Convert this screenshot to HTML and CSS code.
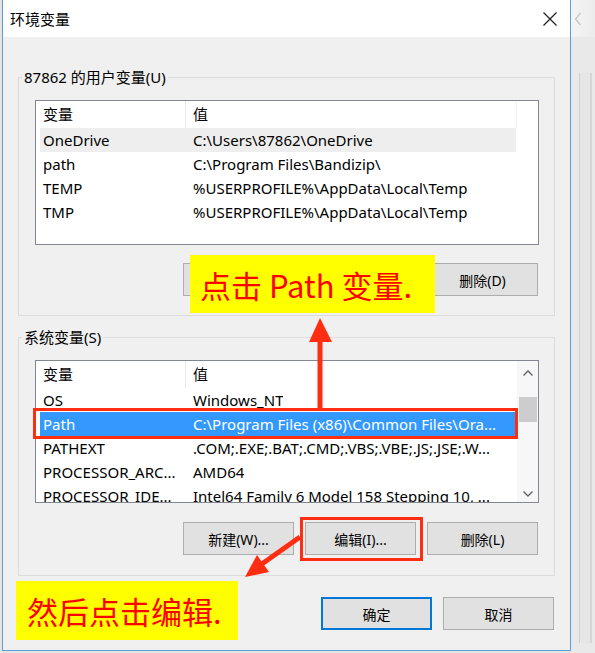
FILE: index.html
```html
<!DOCTYPE html>
<html lang="zh-CN">
<head>
    <meta charset="UTF-8">
    <title>环境变量</title>
    <link rel="stylesheet" href="styles.css">
</head>
<body>
    <div class="screen">
        <div class="dialog">
            <div class="titlebar">
                <span class="title">环境变量</span>
                <svg class="close" width="16" height="16" viewBox="0 0 16 16">
                    <path d="M1.5 1.5 L14.5 14.5 M14.5 1.5 L1.5 14.5" stroke="#222" stroke-width="1.3" fill="none"/>
                </svg>
            </div>
            <div class="content">
                <fieldset class="group group-user">
                    <legend>87862 的用户变量(U)</legend>
                    <div class="listbox list-user">
                        <div class="rows">
                            <div class="list-head"><span class="col-name">变量</span><span class="col-value">值</span></div>
                            <div class="row hover"><span class="col-name">OneDrive</span><span class="col-value">C:\Users\87862\OneDrive</span></div>
                            <div class="row"><span class="col-name">path</span><span class="col-value">C:\Program Files\Bandizip\</span></div>
                            <div class="row"><span class="col-name">TEMP</span><span class="col-value">%USERPROFILE%\AppData\Local\Temp</span></div>
                            <div class="row"><span class="col-name">TMP</span><span class="col-value">%USERPROFILE%\AppData\Local\Temp</span></div>
                        </div>
                        <div class="scroll-space"></div>
                    </div>
                    <div class="buttons">
                        <button>新建(N)...</button>
                        <button>编辑(E)...</button>
                        <button>删除(D)</button>
                    </div>
                </fieldset>

                <fieldset class="group group-system">
                    <legend>系统变量(S)</legend>
                    <div class="listbox list-system">
                        <div class="rows">
                            <div class="list-head"><span class="col-name">变量</span><span class="col-value">值</span></div>
                            <div class="row"><span class="col-name">OS</span><span class="col-value">Windows_NT</span></div>
                            <div class="row selected"><span class="col-name">Path</span><span class="col-value">C:\Program Files (x86)\Common Files\Ora...</span></div>
                            <div class="row"><span class="col-name">PATHEXT</span><span class="col-value">.COM;.EXE;.BAT;.CMD;.VBS;.VBE;.JS;.JSE;.W...</span></div>
                            <div class="row"><span class="col-name">PROCESSOR_ARC...</span><span class="col-value">AMD64</span></div>
                            <div class="row"><span class="col-name">PROCESSOR_IDE...</span><span class="col-value">Intel64 Family 6 Model 158 Stepping 10, ...</span></div>
                        </div>
                        <div class="scrollbar">
                            <svg class="arrow-up" width="12" height="8" viewBox="0 0 12 8"><path d="M1.5 6.5 L6 2 L10.5 6.5" stroke="#606060" stroke-width="1.3" fill="none"/></svg>
                            <div class="thumb"></div>
                            <svg class="arrow-down" width="12" height="8" viewBox="0 0 12 8"><path d="M1.5 1.5 L6 6 L10.5 1.5" stroke="#606060" stroke-width="1.3" fill="none"/></svg>
                        </div>
                    </div>
                    <div class="buttons">
                        <button>新建(W)...</button>
                        <button>编辑(I)...</button>
                        <button>删除(L)</button>
                    </div>
                </fieldset>

                <div class="buttons dialog-buttons">
                    <button class="default">确定</button>
                    <button>取消</button>
                </div>
            </div>
        </div>

        <div class="backwin">
            <div class="backwin-title">
                <svg width="8" height="14" viewBox="0 0 8 14"><path d="M6.5 1 L1.5 7 L6.5 13" stroke="#c4c4c4" stroke-width="1.2" fill="none"/></svg>
            </div>
            <div class="backwin-body">
                <div class="backwin-pane"></div>
            </div>
        </div>

        <div class="note note-top">点击 Path 变量.</div>
        <div class="note note-bottom">然后点击编辑.</div>

        <svg class="marks" width="595" height="653" viewBox="0 0 595 653">
            <rect x="34.5" y="409.5" width="482" height="28" fill="none" stroke="#ff2d12" stroke-width="3"/>
            <rect x="301.5" y="518.5" width="120" height="41" fill="none" stroke="#ff2d12" stroke-width="3"/>
            <path d="M320 408 L320 338" stroke="#ff2d12" stroke-width="5"/>
            <polygon points="320,318 309,342 332,342" fill="#ff2d12"/>
            <path d="M300 537 L259 566" stroke="#ff2d12" stroke-width="5"/>
            <polygon points="245,577 257,555 269,572" fill="#ff2d12"/>
        </svg>
    </div>
</body>
</html>
```

FILE: styles.css
```css
body {
    margin: 0;
    background-color: #e4e4e4;
    font-family: "Noto Sans", "Noto Sans CJK SC", sans-serif;
    font-size: 15px;
    color: #000;
}
.screen {
    position: relative;
    width: 595px;
    height: 653px;
    display: flex;
    overflow: hidden;
}
.dialog {
    box-sizing: border-box;
    width: 569px;
    height: 651px;
    margin-left: 2px;
    border: 1px solid #5a9fd8;
    border-top: none;
    background-color: #f0f0f0;
    display: flex;
    flex-direction: column;
    flex-shrink: 0;
}
.titlebar {
    height: 37px;
    background-color: #fff;
    display: flex;
    align-items: center;
    justify-content: space-between;
    padding: 0 12px 0 7px;
}
.title {
    font-size: 15px;
}
.close {
    display: block;
}
.content {
    flex: 1;
    padding: 0 15px;
}
.group {
    margin: 0;
    border: 1px solid #dcdcdc;
    min-width: 0;
}
.group legend {
    padding: 0 2px;
    margin-left: -13px;
    line-height: 20px;
    font-size: 15px;
}
.group-user {
    margin-top: 30px;
    padding: 13px 15px 19px 16px;
}
.group-system {
    margin-top: 11px;
    padding: 13px 15px 20px 16px;
}
.listbox {
    box-sizing: border-box;
    border: 1px solid #828790;
    background-color: #fff;
    display: flex;
    overflow: hidden;
}
.list-user {
    height: 145px;
}
.list-system {
    height: 143px;
}
.rows {
    flex: 1;
    padding-left: 4px;
    min-width: 0;
}
.list-head, .row {
    display: flex;
    white-space: nowrap;
}
.list-head {
    height: 27px;
    line-height: 27px;
}
.row {
    height: 24px;
    line-height: 24px;
}
.col-name {
    box-sizing: border-box;
    width: 146px;
    padding-left: 3px;
    flex-shrink: 0;
    overflow: hidden;
}
.list-head .col-name {
    border-right: 1px solid #e8e8e8;
}
.col-value {
    padding-left: 7px;
    overflow: hidden;
}
.row.hover {
    background-color: #eeeeee;
}
.row.selected {
    background-color: #3399ff;
    color: #fff;
}
.scroll-space {
    width: 21px;
    border-left: 1px solid #f0f0f0;
    height: 27px;
}
.scrollbar {
    width: 21px;
    background-color: #f7f7f7;
    display: flex;
    flex-direction: column;
    align-items: center;
}
.arrow-up {
    margin-top: 8px;
}
.thumb {
    width: 18px;
    height: 25px;
    margin-top: 20px;
    background-color: #cdcdcd;
}
.arrow-down {
    margin-top: auto;
    margin-bottom: 4px;
}
.buttons {
    display: flex;
    justify-content: flex-end;
    gap: 11px;
}
.group .buttons {
    margin-right: 1px;
}
.group-user .buttons {
    margin-top: 18px;
}
.group-system .buttons {
    margin-top: 19px;
}
button {
    box-sizing: border-box;
    width: 111px;
    height: 33px;
    padding: 0;
    background-color: #e1e1e1;
    border: 1px solid #adadad;
    font-family: "Noto Sans", "Noto Sans CJK SC", sans-serif;
    font-size: 14px;
    color: #000;
}
button.default {
    border: 2px solid #0078d7;
}
.dialog-buttons {
    margin-top: 21px;
    padding-right: 1px;
}
.backwin {
    flex: 1;
    display: flex;
    flex-direction: column;
    background-color: #e9e9e9;
}
.backwin-title {
    height: 37px;
    background: linear-gradient(to right, #f4f4f4, #ececec);
    display: flex;
    align-items: center;
    padding-left: 3px;
}
.backwin-body {
    flex: 1;
    padding: 36px 0 10px 8px;
}
.backwin-pane {
    height: 100%;
    border-left: 1px solid #cfcfcf;
    border-right: 2px solid #d6d6d6;
    margin-right: 3px;
    background-color: #e6e6e6;
}
.note {
    position: absolute;
    box-sizing: border-box;
    background-color: #ffff00;
    color: #ff0000;
    font-family: "Noto Sans CJK SC", sans-serif;
    font-size: 31px;
    display: flex;
    align-items: center;
    white-space: nowrap;
}
.note-top {
    left: 190px;
    top: 255px;
    width: 245px;
    height: 58px;
    padding-left: 10px;
}
.note-bottom {
    left: 16px;
    top: 581px;
    width: 222px;
    height: 59px;
    padding-left: 11px;
}
.marks {
    position: absolute;
    left: 0;
    top: 0;
    pointer-events: none;
}
```
